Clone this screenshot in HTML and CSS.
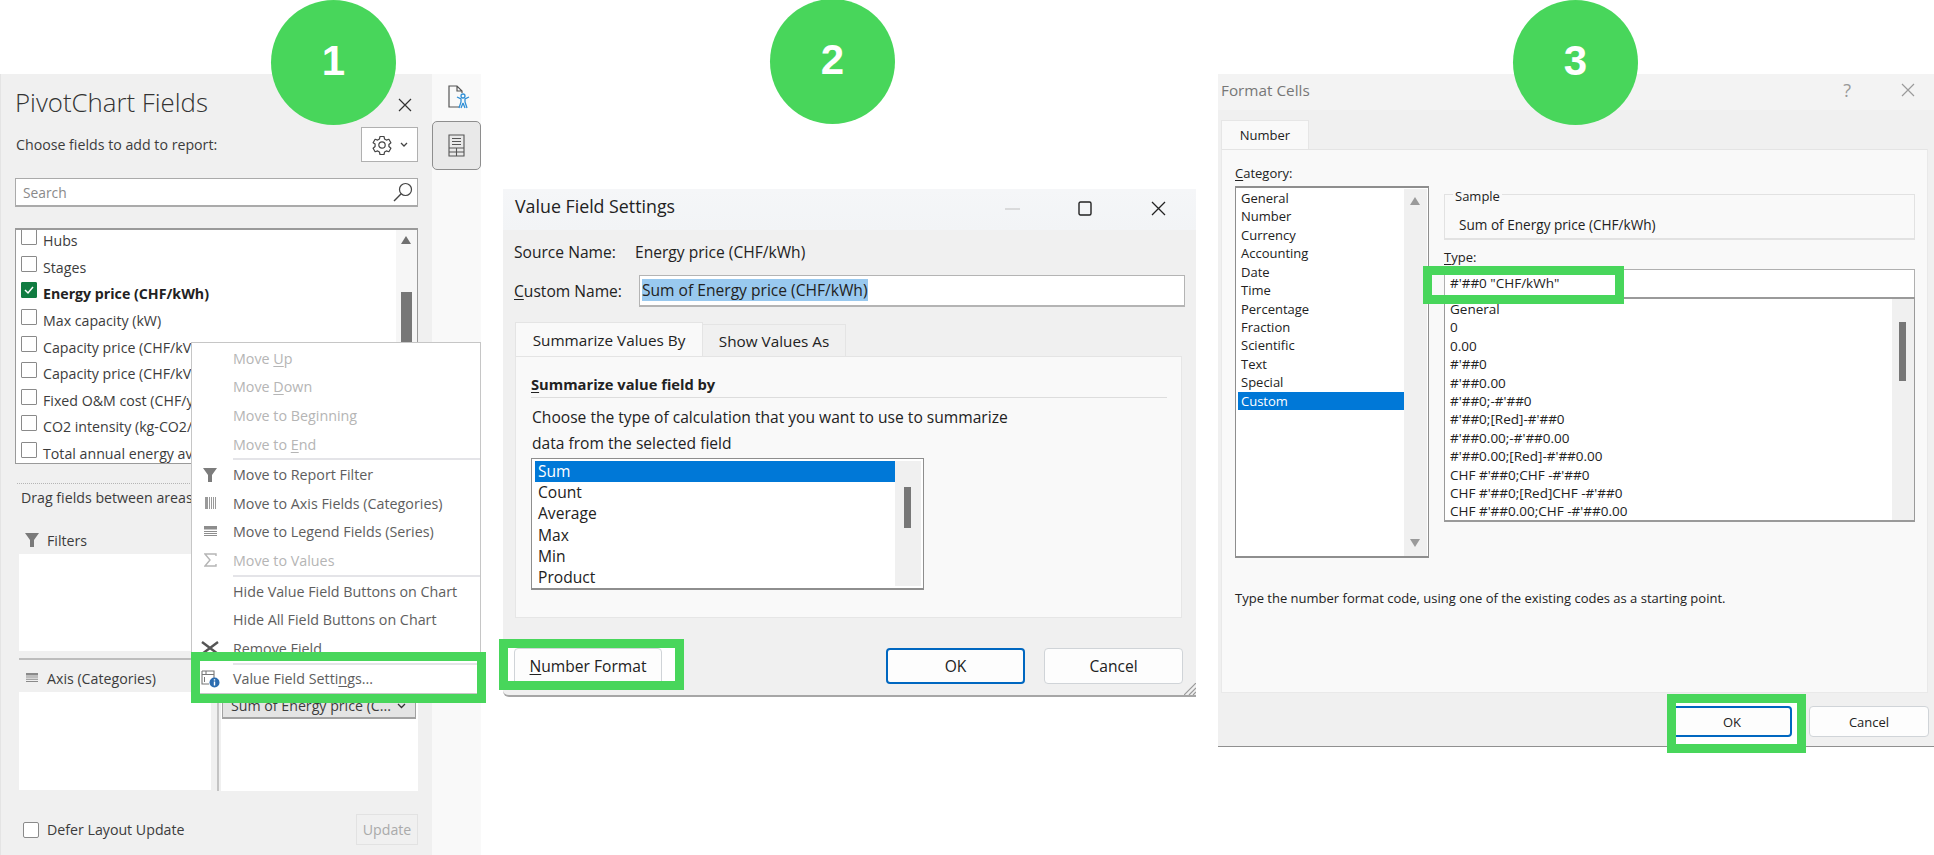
FILE: index.html
```html
<!DOCTYPE html>
<html lang="en">
<head>
<meta charset="utf-8">
<title>PivotChart number format steps</title>
<link rel="stylesheet" href="styles.css">
</head>
<body>
<div class="canvas">

  <section class="pane">
    <div class="pane-main">
      <header class="pane-head">
        <h1 class="pane-title">PivotChart Fields</h1>
        <svg class="pane-close" width="14" height="14" viewBox="0 0 14 14"><path d="M1 1l12 12M13 1L1 13" stroke="#333" stroke-width="1.2" fill="none"/></svg>
      </header>
      <div class="pane-tools">
        <span>Choose fields to add to report:</span>
        <div class="gear-btn">
          <svg width="20" height="20" viewBox="0 0 20 20"><path d="M8 1.500h4l.6 2.600 1.700 1 2.600-.8 2 3.400-2 1.800v2l2 1.800-2 3.400-2.600-.8-1.700 1-.6 2.600H8l-.6-2.600-1.700-1-2.600.8-2-3.400 2-1.800V9L1.100 7.700l2-3.400 2.600.8 1.700-1z" fill="none" stroke="#444" stroke-width="1.200" stroke-linejoin="round"/><circle cx="10" cy="10" r="3.200" fill="none" stroke="#444" stroke-width="1.200"/></svg>
          <svg width="8" height="6" viewBox="0 0 8 6"><path d="M1 1l3 3 3-3" stroke="#444" stroke-width="1.300" fill="none"/></svg>
        </div>
      </div>
      <div class="pane-search">
        <span>Search</span>
        <svg width="20" height="20" viewBox="0 0 20 20"><circle cx="12.500" cy="7.500" r="6" fill="none" stroke="#444" stroke-width="1.200"/><path d="M8.200 11.800L1 19" stroke="#444" stroke-width="1.400"/></svg>
      </div>
      <div class="field-list">
        <div class="field-rows">
          <label class="field-row"><i class="check"></i>Hubs</label>
          <label class="field-row"><i class="check"></i>Stages</label>
          <label class="field-row is-on"><i class="check"><svg width="14" height="14" viewBox="0 0 14 14"><path d="M3 7l3 3 5-6" stroke="#fff" stroke-width="1.500" fill="none"/></svg></i>Energy price (CHF/kWh)</label>
          <label class="field-row"><i class="check"></i>Max capacity (kW)</label>
          <label class="field-row"><i class="check"></i>Capacity price (CHF/kV</label>
          <label class="field-row"><i class="check"></i>Capacity price (CHF/kV</label>
          <label class="field-row"><i class="check"></i>Fixed O&amp;M cost (CHF/y</label>
          <label class="field-row"><i class="check"></i>CO2 intensity (kg-CO2/</label>
          <label class="field-row"><i class="check"></i>Total annual energy av</label>
        </div>
        <div class="field-scroll"><i class="arrow-up"></i><i class="field-thumb"></i></div>
      </div>
      <div class="dotted"></div>
      <div class="drag-note">Drag fields between areas</div>
      <div class="areas areas-top">
        <div class="area">
          <div class="area-label"><svg width="16" height="16" viewBox="0 0 16 16"><path d="M1 1h14L10 8v7H6V8z" fill="#7a7a7a"/></svg>Filters</div>
          <div class="area-box"></div>
        </div>
        <div class="area area-right">
          <div class="area-label"></div>
          <div class="area-box"></div>
        </div>
      </div>
      <div class="areas areas-bottom">
        <div class="area">
          <div class="area-label"><svg width="16" height="16" viewBox="0 0 16 16"><path d="M2 3h12v2.500H2zM2 6.500h12v1H2zM2 8.800h12v1H2zM2 11h12v1H2z" fill="#8a8a8a"/></svg>Axis (Categories)</div>
          <div class="area-box"></div>
        </div>
        <div class="area area-right">
          <div class="area-label"></div>
          <div class="area-box">
            <div class="value-chip"><span>Sum of Energy price (C...</span><svg width="9" height="6" viewBox="0 0 9 6"><path d="M1 1l3.500 3.500L8 1" stroke="#333" stroke-width="1.300" fill="none"/></svg></div>
          </div>
        </div>
      </div>
      <div class="pane-foot">
        <i class="check"></i>
        <span>Defer Layout Update</span>
        <div class="update-btn">Update</div>
      </div>
    </div>
    <aside class="pane-strip">
      <div class="strip-doc">
        <svg width="22" height="24" viewBox="0 0 22 24"><path d="M11 22H1V1h8l5 5v2M9 1v5h5" fill="none" stroke="#555" stroke-width="1.200"/><circle cx="15" cy="11" r="2" fill="none" stroke="#2f8fd6" stroke-width="1.300"/><path d="M9 12l4 2v3l-2 6M21 12l-4 2v3l2 6M15 18l-2 5M15 18l2 5" fill="none" stroke="#2f8fd6" stroke-width="1.300"/></svg>
      </div>
      <div class="strip-btn">
        <svg width="17" height="23" viewBox="0 0 17 23"><path d="M1 1h15v21H1zM1 14h15M1 18h15M8.500 14v8M4 4.500h9M4 7.500h9M4 10.500h9" fill="none" stroke="#555" stroke-width="1.100"/></svg>
      </div>
    </aside>
  </section>

  <nav class="menu">
    <div class="menu-row is-off"><span class="menu-icon"></span><span>Move <u>U</u>p</span></div>
    <div class="menu-row is-off"><span class="menu-icon"></span><span>Move <u>D</u>own</span></div>
    <div class="menu-row is-off"><span class="menu-icon"></span><span>Move to Be<u>g</u>inning</span></div>
    <div class="menu-row is-off"><span class="menu-icon"></span><span>Move to <u>E</u>nd</span></div>
    <div class="menu-sep"></div>
    <div class="menu-row"><span class="menu-icon"><svg width="16" height="16" viewBox="0 0 16 16"><path d="M1 1h14L10 8v7H6V8z" fill="#7c7c7c"/></svg></span><span>Move to Report Filter</span></div>
    <div class="menu-row"><span class="menu-icon"><svg width="12" height="12" viewBox="0 0 12 12"><path d="M1 0h3v12H1zM5 0h1v12H5zM7 0h1v12H7zM9 0h1v12H9zM11 0h1v12h-1z" fill="#9a9a9a"/></svg></span><span>Move to Axis Fields (Categories)</span></div>
    <div class="menu-row"><span class="menu-icon"><svg width="13" height="11" viewBox="0 0 13 11"><path d="M0 0h13v3.500H0zM0 5h13v1H0zM0 7h13v1H0zM0 9h13v1H0z" fill="#8d8d8d"/></svg></span><span>Move to Legend Fields (Series)</span></div>
    <div class="menu-row is-off"><span class="menu-icon"><svg width="13" height="14" viewBox="0 0 13 14"><path d="M12 3V1H1l5 6-5 6h11v-2" fill="none" stroke="#b5b5b5" stroke-width="1.400"/></svg></span><span>Move to Values</span></div>
    <div class="menu-sep"></div>
    <div class="menu-row"><span class="menu-icon"></span><span>Hide Value Field Buttons on Chart</span></div>
    <div class="menu-row"><span class="menu-icon"></span><span>Hide All Field Buttons on Chart</span></div>
    <div class="menu-row"><span class="menu-icon"><svg width="18" height="14" viewBox="0 0 18 14"><path d="M1 1l16 12M17 1L1 13" stroke="#555" stroke-width="2.400" fill="none"/></svg></span><span>Remove Field</span></div>
    <div class="menu-sep"></div>
    <div class="menu-row"><span class="menu-icon"><svg width="19" height="18" viewBox="0 0 19 18"><path d="M1 1h12v9M1 1v13h7M1 4.500h12M5 1v3.500" fill="none" stroke="#777" stroke-width="1.100"/><path d="M3 7h1v5H3z" fill="#777"/><circle cx="13.500" cy="12.500" r="5" fill="#2b6cb0"/><path d="M12.800 11.500h1.400v4h-1.400zM12.800 9.200h1.400v1.300h-1.400z" fill="#fff"/></svg></span><span>Value Field Setti<u>n</u>gs...</span></div>
  </nav>
  <div class="callout callout-vfs"></div>

  <section class="dialog dialog-vfs">
    <header class="dlg-bar">
      <span class="dlg-title">Value Field Settings</span>
      <div class="dlg-ctrls">
        <svg class="ctrl-min" width="15" height="2" viewBox="0 0 15 2"><path d="M0 1h15" stroke="#c8c8c8" stroke-width="1.200"/></svg>
        <svg class="ctrl-max" width="14" height="15" viewBox="0 0 14 15"><rect x="1" y="1" width="12" height="13" rx="1.500" fill="none" stroke="#222" stroke-width="1.400"/></svg>
        <svg class="ctrl-x" width="15" height="15" viewBox="0 0 15 15"><path d="M1 1l13 13M14 1L1 14" stroke="#222" stroke-width="1.300" fill="none"/></svg>
      </div>
    </header>
    <div class="name-row name-source"><span class="name-label">Source Name:</span><span>Energy price (CHF/kWh)</span></div>
    <div class="name-row name-custom"><span class="name-label"><u>C</u>ustom Name:</span><div class="name-input"><mark>Sum of Energy price (CHF/kWh)</mark></div></div>
    <div class="tabs">
      <div class="tab tab-on">Summarize Values By</div>
      <div class="tab tab-off">Show Values As</div>
    </div>
    <div class="tab-body">
      <h2 class="group-head"><u>S</u>ummarize value field by</h2>
      <p class="group-text">Choose the type of calculation that you want to use to summarize<br>data from the selected field</p>
      <div class="calc-list">
        <div class="calc-items">
          <div class="calc-item is-sel">Sum</div>
          <div class="calc-item">Count</div>
          <div class="calc-item">Average</div>
          <div class="calc-item">Max</div>
          <div class="calc-item">Min</div>
          <div class="calc-item">Product</div>
        </div>
        <div class="calc-scroll"><i class="calc-thumb"></i></div>
      </div>
    </div>
    <footer class="dlg-foot">
      <div class="callout callout-num"><button class="btn btn-num"><u>N</u>umber Format</button></div>
      <button class="btn btn-ok btn-main">OK</button>
      <button class="btn btn-main">Cancel</button>
    </footer>
    <svg class="grip" width="12" height="12" viewBox="0 0 12 12"><path d="M0 12L12 0M5 12l7-7M9 12l3-3" stroke="#9a9a9a" stroke-width="1.200"/></svg>
  </section>

  <section class="dialog dialog-fmt">
    <header class="fmt-bar">
      <span class="fmt-title">Format Cells</span>
      <span class="fmt-help">?</span>
      <svg width="14" height="14" viewBox="0 0 14 14"><path d="M1 1l12 12M13 1L1 13" stroke="#9a9a9a" stroke-width="1.200" fill="none"/></svg>
    </header>
    <div class="fmt-tabs"><div class="fmt-tab">Number</div></div>
    <div class="fmt-body">
      <div class="fmt-label"><u>C</u>ategory:</div>
      <div class="fmt-cols">
        <div class="cat-list">
          <div class="cat-items">
            <div class="cat-item">General</div>
            <div class="cat-item">Number</div>
            <div class="cat-item">Currency</div>
            <div class="cat-item">Accounting</div>
            <div class="cat-item">Date</div>
            <div class="cat-item">Time</div>
            <div class="cat-item">Percentage</div>
            <div class="cat-item">Fraction</div>
            <div class="cat-item">Scientific</div>
            <div class="cat-item">Text</div>
            <div class="cat-item">Special</div>
            <div class="cat-item is-sel">Custom</div>
          </div>
          <div class="cat-scroll"><i class="arrow-up arrow-grey"></i><i class="arrow-down"></i></div>
        </div>
        <div class="fmt-right">
          <fieldset class="sample"><legend>Sample</legend>Sum of Energy price (CHF/kWh)</fieldset>
          <div class="type-label"><u>T</u>ype:</div>
          <div class="type-input">#'##0 "CHF/kWh"</div>
          <div class="type-list">
            <div class="type-items">
              <div class="type-item">General</div>
              <div class="type-item">0</div>
              <div class="type-item">0.00</div>
              <div class="type-item">#'##0</div>
              <div class="type-item">#'##0.00</div>
              <div class="type-item">#'##0;-#'##0</div>
              <div class="type-item">#'##0;[Red]-#'##0</div>
              <div class="type-item">#'##0.00;-#'##0.00</div>
              <div class="type-item">#'##0.00;[Red]-#'##0.00</div>
              <div class="type-item">CHF #'##0;CHF -#'##0</div>
              <div class="type-item">CHF #'##0;[Red]CHF -#'##0</div>
              <div class="type-item">CHF #'##0.00;CHF -#'##0.00</div>
            </div>
            <div class="type-scroll"><i class="type-thumb"></i></div>
          </div>
        </div>
      </div>
      <p class="fmt-note">Type the number format code, using one of the existing codes as a starting point.</p>
    </div>
    <footer class="fmt-foot">
      <div class="callout callout-ok"><button class="btn btn-fmt btn-ok">OK</button></div>
      <button class="btn btn-fmt btn-cancel">Cancel</button>
    </footer>
  </section>
  <div class="callout callout-type"></div>

  <div class="step step-1">1</div>
  <div class="step step-2">2</div>
  <div class="step step-3">3</div>
</div>
</body>
</html>
```
FILE: styles.css
```css
* { box-sizing: border-box; }
html, body { margin: 0; padding: 0; background: #fff; }
body { font-family: "Open Sans", "Noto Sans", sans-serif; color: #333; overflow: hidden; }
.canvas { position: relative; width: 1934px; height: 855px; overflow: hidden; background: #fff; }
i { display: block; }
u { text-underline-offset: 2px; }

/* step badges */
.step { position: absolute; top: 0; width: 125px; height: 125px; border-radius: 50%; background: #48d65b; color: #fff; font: bold 42px/121px "Liberation Sans", Arial, sans-serif; text-align: center; }
.step-1 { left: 271px; }
.step-2 { left: 770px; top: -1px; }
.step-3 { left: 1513px; }

/* callouts */
.callout { border: 9px solid #48d65b; }
.callout-vfs { position: absolute; left: 191px; top: 652px; width: 295px; height: 51px; }
.callout-type { position: absolute; left: 1423px; top: 266px; width: 201px; height: 38px; }

/* pane */
.pane { position: absolute; left: 0; top: 74px; width: 481px; height: 781px; display: flex; font-size: 14.200px; color: #3c3c3c; }
.pane-main { width: 432px; background: #f0f0f0; border-left: 1px solid #e4e4e4; display: flex; flex-direction: column; }
.pane-head { height: 53px; padding: 2px 14px 0 14px; display: flex; align-items: center; justify-content: space-between; }
.pane-title { margin: 0; font-size: 25.800px; font-weight: 300; color: #333; white-space: nowrap; }
.pane-close { margin-right: 6px; margin-top: 7px; }
.pane-tools { height: 35px; padding: 0 14px 0 15px; display: flex; align-items: center; justify-content: space-between; }
.gear-btn { width: 57px; height: 35px; background: #fff; border: 1px solid #b0b0b0; display: flex; align-items: center; justify-content: center; gap: 8px; }
.pane-search { height: 29px; margin: 16px 14px 0 14px; background: #fff; border: 2px solid #aaa; border-width: 1px 1px 2px 1px; display: flex; align-items: center; justify-content: space-between; padding: 0 4px 0 7px; color: #8a8a8a; font-size: 13.800px; }
.field-list { height: 236px; margin: 21px 14px 0 14px; background: #fff; border: 1px solid #9a9a9a; border-top-width: 2px; display: flex; overflow: hidden; }
.field-rows { flex: 1; margin-top: -2.600px; padding-left: 5px; min-width: 0; }
.field-row { display: flex; align-items: center; height: 26.600px; white-space: nowrap; }
.check { width: 16px; height: 16px; flex: none; margin: -7px 6px 0 0; background: #fff; border: 1px solid #8a8a8a; border-radius: 1px; }
.field-row.is-on { font-weight: 700; color: #222; }
.field-row.is-on .check { background: #107c41; border-color: #107c41; }
.field-row.is-on .check svg { display: block; margin: 0; }
.field-scroll { width: 21px; background: #f6f6f6; padding: 6px 5px 0; flex: none; }
.arrow-up { width: 0; height: 0; border-left: 5.500px solid transparent; border-right: 5.500px solid transparent; border-bottom: 8px solid #707070; }
.field-thumb { width: 11px; height: 60px; margin-top: 48px; background: #777; }
.dotted { margin: 19px 0 0 16px; border-top: 1px dotted #b5b5b5; height: 1px; }
.drag-note { height: 20px; margin: 4px 0 0 20px; line-height: 20px; white-space: nowrap; }
.areas { display: grid; grid-template-columns: 192px 201px; column-gap: 6px; margin-left: 18px; }
.areas-top { margin-top: 20px; }
.areas-bottom { margin-top: 7px; padding-top: 6px; border-top: 2px solid #bdbdbd; width: 399px; }
.area-label { height: 24px; display: flex; align-items: center; gap: 7px; padding-left: 5px; margin-bottom: 2px; white-space: nowrap; }
.area-box { height: 97px; background: #fff; }
.areas-bottom .area-box { height: 98px; }
.area-right { border-left: 2px solid #c4c4c4; padding-left: 2px; }
.value-chip { margin: 3px 2px 0 1px; height: 26px; background: #e4e4e4; border: 1px solid #a2a2a2; border-bottom-width: 2px; display: flex; align-items: center; justify-content: space-between; padding: 0 9px 0 8px; white-space: nowrap; }
.pane-foot { margin-top: 23px; height: 31px; display: flex; align-items: center; padding: 0 14px 0 22px; }
.pane-foot .check { margin: 0 8px 0 0; width: 16px; border-radius: 2px; }
.update-btn { margin-left: auto; width: 62px; height: 31px; border: 1px solid #e2e2e2; color: #aaa; line-height: 29px; text-align: center; }
.pane-strip { width: 49px; background: #f9f9f9; }
.strip-doc { height: 47px; padding: 11px 0 0 16px; }
.strip-btn { height: 49px; background: #e9e9e9; border: 1px solid #8e8e8e; border-radius: 5px; padding: 12px 0 0 15px; }
.strip-doc svg, .strip-btn svg { display: block; }

/* context menu */
.menu { position: absolute; left: 191px; top: 342px; width: 290px; height: 352px; background: #fff; border: 1px solid #c6c6c6; padding-top: 1px; font-size: 14.300px; color: #5e5e5e; }
.menu-row { display: flex; align-items: center; height: 28.600px; white-space: nowrap; }
.menu-row.is-off { color: #b5b5b5; }
.menu-icon { width: 41px; flex: none; display: flex; justify-content: center; padding-right: 5px; }
.menu-sep { height: 2px; margin-left: 41px; background: #e4e4e8; }

/* dialogs */
.dialog { position: absolute; }
.dialog-vfs { left: 503px; top: 189px; width: 693px; height: 508px; background: #f0f0f0; border-bottom: 2px solid #a6a6a6; border-bottom-left-radius: 6px; display: flex; flex-direction: column; font-size: 15.600px; color: #222; }
.dlg-bar { height: 41px; flex: none; background: linear-gradient(#f5f6f8, #f2f4f6); display: flex; align-items: center; justify-content: space-between; padding: 0 30px 0 12px; }
.dlg-title { font-size: 17.800px; margin-top: -7px; }
.dlg-ctrls { display: flex; align-items: center; margin-top: -2px; }
.ctrl-min { margin-right: 58px; }
.ctrl-max { margin-right: 59px; }
.name-row { display: flex; align-items: center; padding-left: 11px; }
.name-source { height: 22px; margin-top: 11px; }
.name-source .name-label { width: 121px; }
.name-custom { height: 32px; margin-top: 12px; }
.name-custom .name-label { width: 125px; }
.name-input { width: 546px; height: 32px; background: #fff; border: 1px solid #b4b4b4; border-bottom-width: 2px; padding: 3px 2px; line-height: 22px; }
.name-input mark { display: inline-block; background: #99c9ef; color: #222; height: 22px; }
.tabs { display: flex; align-items: flex-end; margin: 15px 0 0 12px; height: 34px; font-size: 15.300px; }
.tab { display: flex; align-items: center; justify-content: center; border: 1px solid #e4e4e4; border-bottom: 0; padding-top: 1px; white-space: nowrap; }
.tab-on { width: 188px; height: 34px; background: #f9f9f9; }
.tab-off { width: 143px; height: 32px; background: #f0f0f0; border-left: 0; }
.tab-body { width: 667px; height: 262px; margin-left: 12px; flex: none; background: #f9f9f9; border: 1px solid #e6e6e6; border-top-color: #e4e4e4; padding: 16px 14px 0 15px; }
.group-head { margin: 0; height: 25px; font-size: 14.700px; font-weight: 700; border-bottom: 1px solid #ddd; line-height: 22px; white-space: nowrap; }
.group-text { margin: 6px 0 0 1px; line-height: 26px; white-space: nowrap; }
.calc-list { width: 393px; height: 132px; margin-top: 2px; background: #fff; border: 1px solid #8e8e8e; border-bottom-width: 2px; display: flex; padding: 2px 2px 2px 3px; }
.calc-items { flex: 1; }
.calc-item { height: 21.200px; line-height: 21.200px; padding-left: 3px; }
.calc-item.is-sel { background: #0078d7; color: #fff; }
.calc-scroll { width: 26px; flex: none; background: #f0f0f0; padding: 26px 0 0 9px; }
.calc-thumb { width: 7px; height: 41px; background: #777; }
.dlg-foot { flex: none; margin-top: 21px; height: 56px; display: flex; align-items: flex-start; padding-right: 13px; }
.btn { font: inherit; color: #222; background: #fdfdfd; border: 1px solid #d0d4d8; border-radius: 4px; padding: 0; cursor: default; }
.callout-num { width: 185px; height: 51px; margin-left: -4px; background: #fff; overflow: hidden; padding-left: 6px; }
.btn-num { display: block; width: 148px; height: 40px; padding-bottom: 5px; }
.btn-main { width: 139px; height: 36px; margin-top: 9px; }
.btn-ok { border: 2px solid #0067c0; }
.dlg-foot .btn-ok { margin-left: auto; margin-right: 19px; }
.grip { position: absolute; right: 0; bottom: 0; }

.dialog-fmt { left: 1218px; top: 74px; width: 716px; height: 673px; background: #f0f0f0; border-bottom: 1px solid #909090; display: flex; flex-direction: column; font-size: 13px; color: #222; }
.fmt-bar { height: 36px; flex: none; background: #f3f3f3; display: flex; align-items: center; padding: 0 19px 0 3px; }
.fmt-title { font-size: 15.300px; color: #777; margin-right: auto; margin-top: -4px; white-space: nowrap; }
.fmt-help { font-size: 18px; color: #999; margin-right: 50px; margin-top: -4px; }
.fmt-bar svg { margin-top: -4px; }
.fmt-tabs { height: 39px; flex: none; padding: 10px 0 0 3px; }
.fmt-tab { width: 88px; height: 29px; background: #f9f9f9; border: 1px solid #e6e6e6; border-bottom: 0; display: flex; align-items: center; justify-content: center; }
.fmt-body { width: 707px; height: 544px; margin-left: 3px; flex: none; background: #f9f9f9; border: 1px solid #e9e9e9; border-top-color: #e4e4e4; padding: 13px 13px 0 13px; }
.fmt-label { height: 20px; line-height: 20px; }
.fmt-cols { display: grid; grid-template-columns: 194px 471px; column-gap: 15px; margin-top: 3px; }
.cat-list { height: 372px; background: #fff; border: 1px solid #8e8e8e; border-top-width: 2px; border-bottom-width: 2px; display: flex; padding: 1px 1px 0 2px; }
.cat-items { flex: 1; min-width: 0; }
.cat-item { height: 18.430px; line-height: 18.430px; padding-left: 3px; white-space: nowrap; }
.cat-item.is-sel { background: #0078d7; color: #fff; }
.cat-scroll { width: 23px; flex: none; background: #f0f0f0; padding: 8px 5px 9px 6px; display: flex; flex-direction: column; justify-content: space-between; }
.arrow-grey { border-bottom-color: #9a9a9a; }
.arrow-down { width: 0; height: 0; border-left: 5.500px solid transparent; border-right: 5.500px solid transparent; border-top: 8px solid #9a9a9a; }
.fmt-right { min-width: 0; }
.sample { margin: -2px 0 0; padding: 11px 0 0 14px; height: 56px; border: 1px solid #e2e2e2; border-bottom-width: 2px; line-height: 20px; min-width: 0; font-size: 13.600px; }
.sample legend { height: 20px; padding: 4px 2px 0 2px; margin-left: -6px; line-height: 16px; font-size: 13px; }
.type-label { height: 20px; margin-top: 7px; line-height: 20px; }
.type-input { height: 28px; margin-top: 2px; background: #fff; border: 1px solid #b0b0b0; border-bottom: 0; padding-left: 5px; line-height: 26px; font-size: 13.500px; }
.type-list { height: 225px; background: #fff; border: 1px solid #9a9a9a; border-top-width: 2px; border-bottom-width: 2px; display: flex; overflow: hidden; font-size: 13.500px; }
.type-items { flex: 1; min-width: 0; padding: 1px 0 0 5px; }
.type-item { height: 18.400px; line-height: 18.400px; white-space: nowrap; }
.type-scroll { width: 22px; flex: none; background: #f0f0f0; padding: 23px 0 0 7px; }
.type-thumb { width: 7px; height: 59px; background: #777; }
.fmt-note { margin: 30px 0 0; line-height: 20px; white-space: nowrap; }
.fmt-foot { position: relative; height: 53px; flex: none; display: flex; align-items: flex-start; justify-content: flex-end; padding: 1px 5px 0 0; }
.callout-ok { width: 139px; height: 59px; background: #fff; overflow: hidden; margin-right: 3px; }
.btn-fmt { width: 120px; height: 31px; }
.callout-ok .btn-fmt { display: block; margin: 3px 0 0 -4px; }
.btn-cancel { margin-top: 12px; }
```
